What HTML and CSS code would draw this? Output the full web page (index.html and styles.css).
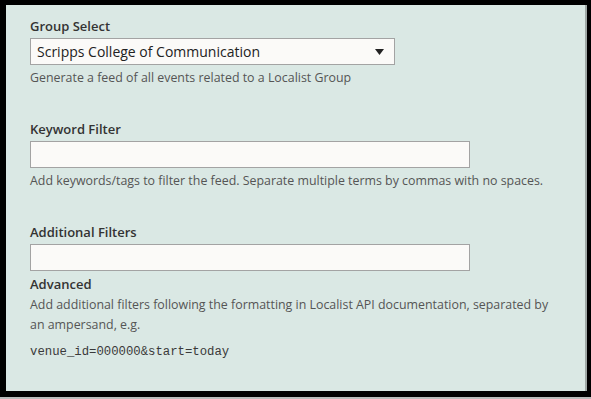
FILE: index.html
```html
<!DOCTYPE html>
<html lang="en">
  <head>
    <meta charset="UTF-8" />
    <meta name="viewport" content="width=device-width, initial-scale=1.0" />
    <title>Localist Feed Settings</title>
    <link rel="stylesheet" href="styles.css">
  </head>
  <body>
    <div class="panel">
      <div class="field">
        <label for="group">Group Select</label>
        <div class="select-wrap">
          <select id="group" class="control select">
            <option>Scripps College of Communication</option>
          </select>
          <svg class="arrow" width="9" height="6" viewBox="0 0 9 6">
            <polygon points="0,0 9,0 4.5,6" fill="#222" />
          </svg>
        </div>
        <p class="help">Generate a feed of all events related to a Localist Group</p>
      </div>

      <div class="field">
        <label for="keywords">Keyword Filter</label>
        <input type="text" id="keywords" class="control input" />
        <p class="help">Add keywords/tags to filter the feed. Separate multiple terms by commas with no spaces.</p>
      </div>

      <div class="field">
        <label for="filters">Additional Filters</label>
        <input type="text" id="filters" class="control input" />
        <h4 class="sub">Advanced</h4>
        <p class="help long">Add additional filters following the formatting in Localist API documentation, separated by an ampersand, e.g.</p>
        <code class="example">venue_id=000000&amp;start=today</code>
      </div>
    </div>
  </body>
</html>
```

FILE: styles.css
```css
* {
  margin: 0;
  padding: 0;
  box-sizing: border-box;
}

body {
  background: #000;
  font-family: "Open Sans", "Noto Sans", sans-serif;
  height: 399px;
  overflow: hidden;
  border-bottom: 2px solid #b9bcbb;
}

.panel {
  margin: 5px 4px 0 6px;
  height: 386px;
  background: #dae8e4;
  border-right: 2px solid #9fa8a5;
  padding: 12px 22px 0 24px;
}

.field {
  margin-bottom: 33px;
}

.field label {
  display: block;
  font-size: 13px;
  font-weight: 600;
  line-height: 18px;
  color: #333;
  margin-bottom: 3px;
}

.control {
  display: block;
  height: 27px;
  border: 1px solid #a3a3a3;
  background: #fbfaf8;
  font-family: inherit;
  font-size: 14px;
  color: #222;
  border-radius: 0;
  outline: none;
}

.select-wrap {
  position: relative;
  width: 365px;
}

.select {
  width: 100%;
  appearance: none;
  -webkit-appearance: none;
  padding: 0 30px 0 6px;
}

.arrow {
  position: absolute;
  right: 11px;
  top: 11px;
}

.input {
  width: 440px;
}

.help {
  font-size: 12.4px;
  line-height: 18px;
  color: #555;
  margin-top: 4px;
}

.sub {
  font-size: 13px;
  font-weight: 600;
  line-height: 18px;
  color: #333;
  margin-top: 4px;
}

.help.long {
  line-height: 20px;
  margin-top: 2px;
}

.example {
  display: block;
  font-family: "Liberation Mono", monospace;
  font-size: 12.3px;
  line-height: 18px;
  color: #3a3a3a;
  margin-top: 8px;
}
```
